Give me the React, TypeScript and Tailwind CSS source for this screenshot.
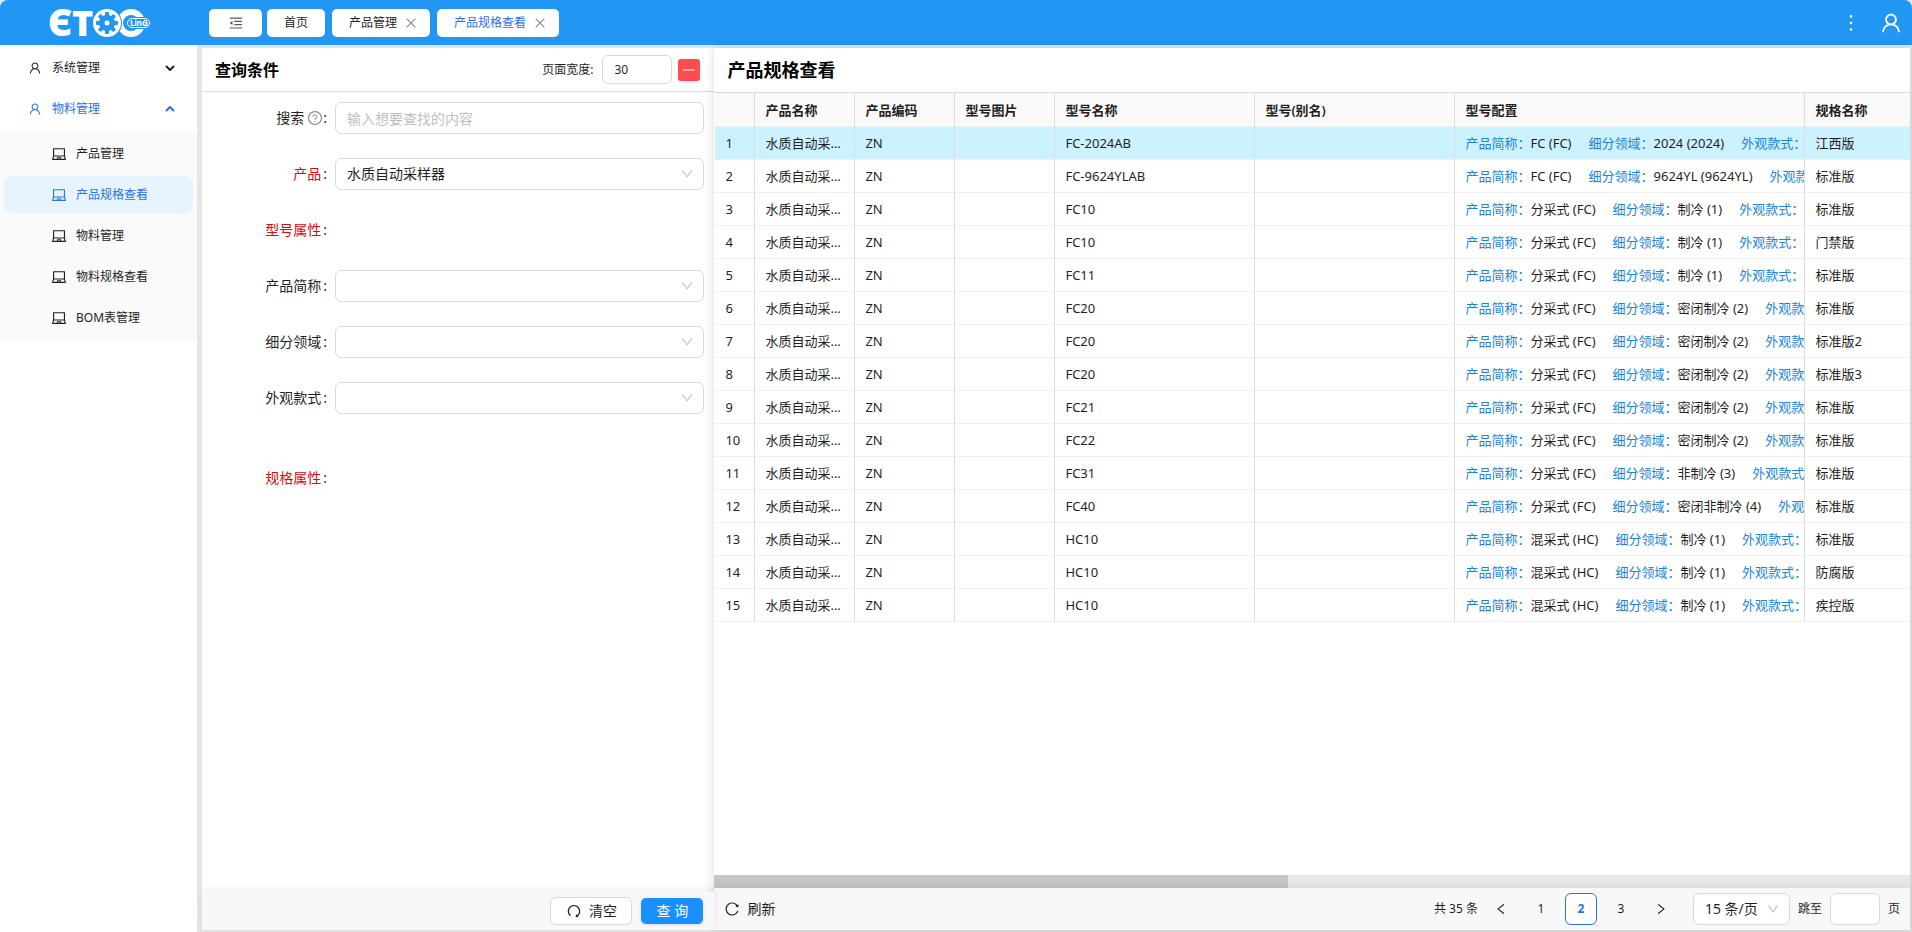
import { useState } from 'react'
import type { ReactNode } from 'react'
import {
      AiOutlineClose,
      AiOutlineDown,
      AiOutlineLaptop,
      AiOutlineLeft,
      AiOutlineMenuFold,
      AiOutlineMinus,
      AiOutlineMore,
      AiOutlineQuestionCircle,
      AiOutlineRedo,
      AiOutlineReload,
      AiOutlineRight,
      AiOutlineUser
} from 'react-icons/ai'

interface SpecRow {
      model: string
      short: string
      field: string
      spec: string
}

const rows: SpecRow[] = [
      { model: 'FC-2024AB', short: 'FC (FC)', field: '2024 (2024)', spec: '江西版' },
      { model: 'FC-9624YLAB', short: 'FC (FC)', field: '9624YL (9624YL)', spec: '标准版' },
      { model: 'FC10', short: '分采式 (FC)', field: '制冷 (1)', spec: '标准版' },
      { model: 'FC10', short: '分采式 (FC)', field: '制冷 (1)', spec: '门禁版' },
      { model: 'FC11', short: '分采式 (FC)', field: '制冷 (1)', spec: '标准版' },
      { model: 'FC20', short: '分采式 (FC)', field: '密闭制冷 (2)', spec: '标准版' },
      { model: 'FC20', short: '分采式 (FC)', field: '密闭制冷 (2)', spec: '标准版2' },
      { model: 'FC20', short: '分采式 (FC)', field: '密闭制冷 (2)', spec: '标准版3' },
      { model: 'FC21', short: '分采式 (FC)', field: '密闭制冷 (2)', spec: '标准版' },
      { model: 'FC22', short: '分采式 (FC)', field: '密闭制冷 (2)', spec: '标准版' },
      { model: 'FC31', short: '分采式 (FC)', field: '非制冷 (3)', spec: '标准版' },
      { model: 'FC40', short: '分采式 (FC)', field: '密闭非制冷 (4)', spec: '标准版' },
      { model: 'HC10', short: '混采式 (HC)', field: '制冷 (1)', spec: '标准版' },
      { model: 'HC10', short: '混采式 (HC)', field: '制冷 (1)', spec: '防腐版' },
      { model: 'HC10', short: '混采式 (HC)', field: '制冷 (1)', spec: '疾控版' }
]

const columns = [
      { title: '', width: 'w-[40px]' },
      { title: '产品名称', width: 'w-[100px]' },
      { title: '产品编码', width: 'w-[100px]' },
      { title: '型号图片', width: 'w-[100px]' },
      { title: '型号名称', width: 'w-[200px]' },
      { title: '型号(别名)', width: 'w-[200px]' },
      { title: '型号配置', width: 'w-[350px]' },
      { title: '规格名称', width: '' }
]

const subMenu = ['产品管理', '产品规格查看', '物料管理', '物料规格查看', 'BOM表管理']

function Logo() {
      const teeth = [0, 45, 90, 135, 180, 225, 270, 315]
      return (
            <svg
                  width="104"
                  height="30"
                  viewBox="0 0 104 30"
                  role="img"
                  aria-label="ETOC LinG"
                  fill="#fff"
                  className="overflow-visible"
            >
                  <text x="-1" y="28" fontSize="37" fontWeight="900" fontFamily="Noto Sans">Є</text>
                  <text x="23" y="28" fontSize="36" fontWeight="900" fontFamily="Noto Sans">T</text>
                  <circle cx="82" cy="15" r="11" fill="none" stroke="#fff" strokeWidth="6" />
                  <circle cx="58" cy="15" r="15" fill="#2196f3" />
                  <circle cx="58" cy="15" r="14" />
                  <circle cx="58" cy="15" r="8" fill="#2196f3" />
                  {teeth.map((a) => (
                        <rect
                              key={a}
                              x="56"
                              y="4"
                              width="4"
                              height="5"
                              rx="1"
                              fill="#2196f3"
                              transform={`rotate(${a} 58 15)`}
                        />
                  ))}
                  <circle cx="58" cy="15" r="2.5" />
                  <rect x="76" y="9" width="26" height="12" rx="6" fill="#2196f3" />
                  <rect x="78.5" y="10.5" width="22" height="9" rx="4.5" fill="#2196f3" stroke="#fff" />
                  <text x="81" y="18" fontSize="8" fontWeight="700" fontFamily="Noto Sans">LinG</text>
            </svg>
      )
}

function Chevron({ up }: { up?: boolean }) {
      return (
            <svg width="10" height="6" viewBox="0 0 10 6" fill="none" stroke="currentColor" strokeWidth="2">
                  <path d={up ? 'M1 5l4-4 4 4' : 'M1 1l4 4 4-4'} />
            </svg>
      )
}

interface FieldProps {
      id?: string
      label: string
      red?: boolean
      help?: boolean
      children?: ReactNode
}

function Field({ id, label, red, help, children }: FieldProps) {
      return (
            <div className="flex h-8 items-center text-sm">
                  <label htmlFor={id} className="flex w-[133px] shrink-0 items-center justify-end pr-2">
                        <span className={red ? 'text-[#d9090f]' : ''}>{label}</span>
                        {help && <AiOutlineQuestionCircle className="ml-[3px] size-4 text-[#8c8c8c]" />}
                        <span className={help ? '' : 'ml-0.5'}>:</span>
                  </label>
                  {children}
            </div>
      )
}

function FieldSelect({ id, value }: { id: string; value?: string }) {
      return (
            <div className="relative min-w-0 flex-1">
                  <select
                        id={id}
                        defaultValue={value ?? ''}
                        className="h-8 w-full appearance-none rounded-md border border-[#d9d9d9] bg-white px-[11px] text-sm"
                  >
                        <option value={value ?? ''}>{value ?? ''}</option>
                  </select>
                  <AiOutlineDown className="pointer-events-none absolute top-[9px] right-[10px] size-[14px] text-[#bfbfbf]" />
            </div>
      )
}

export default function App() {
      const [page, setPage] = useState(2)
      const [selected, setSelected] = useState(0)

      return (
            <div className="flex h-screen flex-col overflow-hidden bg-[#e6e6e6] font-['Noto_Sans','Noto_Sans_CJK_SC',sans-serif] text-[#1f1f1f]">
                  <header className="flex h-[45px] shrink-0 items-center rounded-t-lg bg-[#2196f3]">
                        <div className="w-[209px] shrink-0 pl-[49px]">
                              <Logo />
                        </div>
                        <nav className="flex gap-[7px] text-xs">
                              <button aria-label="收起菜单" className="-mr-[2px] flex h-7 w-[53px] items-center justify-center rounded-[5px] bg-white text-[#595959]">
                                    <AiOutlineMenuFold className="size-4" />
                              </button>
                              <button className="h-7 w-[58px] rounded-[5px] bg-white">首页</button>
                              <button className="flex h-7 items-center gap-[7px] rounded-[5px] bg-white pr-3 pl-[17px]">
                                    产品管理
                                    <AiOutlineClose className="size-[14px] text-[#8c8c8c]" />
                              </button>
                              <button className="flex h-7 items-center gap-[7px] rounded-[5px] bg-white pr-3 pl-[17px] text-[#2a70e8]">
                                    产品规格查看
                                    <AiOutlineClose className="size-[14px] text-[#8c8c8c]" />
                              </button>
                        </nav>
                        <div className="ml-auto flex items-center gap-4 pr-[9px] text-white">
                              <button aria-label="更多">
                                    <AiOutlineMore className="size-6" />
                              </button>
                              <button aria-label="用户">
                                    <AiOutlineUser className="size-6" />
                              </button>
                        </div>
                  </header>

                  <div className="flex min-h-0 flex-1">
                        <aside className="w-[197px] shrink-0 bg-white pt-1 text-xs">
                              <button className="flex h-[37px] w-full items-center gap-[10px] pr-[22px] pl-7">
                                    <AiOutlineUser className="size-[14px]" />
                                    <span>系统管理</span>
                                    <span className="ml-auto">
                                          <Chevron />
                                    </span>
                              </button>
                              <button className="mt-1 flex h-[37px] w-full items-center gap-[10px] pr-[22px] pl-7 text-[#2a70e8]">
                                    <AiOutlineUser className="size-[14px]" />
                                    <span>物料管理</span>
                                    <span className="ml-auto">
                                          <Chevron up />
                                    </span>
                              </button>
                              <ul className="mt-1 flex flex-col gap-1 bg-[#fafafa] p-1">
                                    {subMenu.map((item, i) => (
                                          <li key={item}>
                                                <a
                                                      href="#"
                                                      className={
                                                            i === 1
                                                                  ? 'flex h-[37px] items-center gap-[9px] rounded-lg bg-[#e6f4ff] pl-[47px] text-[#2a70e8]'
                                                                  : 'flex h-[37px] items-center gap-[9px] rounded-lg pl-[47px]'
                                                      }
                                                >
                                                      <AiOutlineLaptop className="size-4" />
                                                      {item}
                                                </a>
                                          </li>
                                    ))}
                              </ul>
                        </aside>

                        <main className="mt-[3px] mr-[2px] mb-[2px] ml-[5px] flex min-w-0 flex-1 bg-white">
                              {/* query conditions */}
                              <section className="flex w-[30%] shrink-0 flex-col">
                                    <div className="flex h-11 shrink-0 items-center border-b border-[#d9d9d9] pr-[14px] pl-[13px]">
                                          <h2 className="text-base font-bold text-black">查询条件</h2>
                                          <label htmlFor="page-width" className="mr-[9px] ml-auto text-xs">
                                                页面宽度:
                                          </label>
                                          <input
                                                id="page-width"
                                                defaultValue="30"
                                                className="h-[29px] w-[70px] rounded-md border border-[#d9d9d9] px-[11px] text-xs"
                                          />
                                          <button
                                                aria-label="收起"
                                                className="ml-[6px] flex h-[22px] w-[22px] items-center justify-center rounded-[3px] bg-[#ff4d4f] text-white shadow-sm"
                                          >
                                                <AiOutlineMinus className="size-4" />
                                          </button>
                                    </div>
                                    <form className="flex min-h-0 flex-1 flex-col gap-6 overflow-hidden pt-[10px] pr-[10px]">
                                          <Field id="keyword" label="搜索" help>
                                                <input
                                                      id="keyword"
                                                      placeholder="输入想要查找的内容"
                                                      className="h-8 min-w-0 flex-1 rounded-md border border-[#d9d9d9] px-[11px] text-sm placeholder:text-[#bfbfbf]"
                                                />
                                          </Field>
                                          <Field id="product" label="产品" red>
                                                <FieldSelect id="product" value="水质自动采样器" />
                                          </Field>
                                          <Field label="型号属性" red />
                                          <Field id="short" label="产品简称">
                                                <FieldSelect id="short" />
                                          </Field>
                                          <Field id="field" label="细分领域">
                                                <FieldSelect id="field" />
                                          </Field>
                                          <Field id="style" label="外观款式">
                                                <FieldSelect id="style" />
                                          </Field>
                                          <div className="pt-6">
                                                <Field label="规格属性" red />
                                          </div>
                                    </form>
                                    <div className="relative z-20 flex h-[38px] shrink-0 items-center justify-end gap-[9px] bg-[#f8f8f8] pr-[11px] text-sm shadow-[0_-2px_8px_rgba(0,0,0,0.08)]">
                                          <button className="flex h-7 w-[82px] items-center justify-center gap-[7px] rounded-md border border-[#d9d9d9] bg-white">
                                                <AiOutlineRedo className="size-4" />
                                                清空
                                          </button>
                                          <button className="h-[26px] w-[62px] rounded-[5px] bg-[#1890ff] text-white shadow-sm">查 询</button>
                                    </div>
                              </section>

                              {/* result table */}
                              <section className="relative z-10 flex min-w-0 flex-1 flex-col bg-white shadow-[0_0_10px_rgba(0,0,0,0.15)]">
                                    <h2 className="flex h-[45px] shrink-0 items-center border-b border-[#d9d9d9] pl-[13px] text-lg font-bold text-black">
                                          产品规格查看
                                    </h2>
                                    <div className="min-h-0 flex-1 overflow-hidden pl-px">
                                          <table className="w-full table-fixed border-separate border-spacing-0 text-[13px] leading-5">
                                                <thead>
                                                      <tr>
                                                            {columns.map((col, i) => (
                                                                  <th
                                                                        key={i}
                                                                        className={`${col.width} h-[34px] border-r border-b border-r-[#dcdcdc] border-b-[#f0f0f0] bg-[#fafafa] px-[10px] text-left font-semibold first:rounded-tl-lg last:border-r-0`}
                                                                  >
                                                                        {col.title}
                                                                  </th>
                                                            ))}
                                                      </tr>
                                                </thead>
                                                <tbody>
                                                      {rows.map((row, i) => (
                                                            <tr
                                                                  key={i}
                                                                  onClick={() => setSelected(i)}
                                                                  className={`${selected === i ? 'bg-[#ccf1ff]' : 'bg-white'} *:h-[33px] *:border-r *:border-b *:border-r-[#dcdcdc] *:border-b-[#f0f0f0] *:pl-[10px] *:last:border-r-0`}
                                                            >
                                                                  <td>{i + 1}</td>
                                                                  <td className="truncate pr-2">水质自动采样器</td>
                                                                  <td>ZN</td>
                                                                  <td></td>
                                                                  <td>{row.model}</td>
                                                                  <td></td>
                                                                  <td className="overflow-hidden whitespace-nowrap">
                                                                        <span className="text-[#1c84d6]">产品简称：</span>
                                                                        <span className="mr-[17px]">{row.short}</span>
                                                                        <span className="text-[#1c84d6]">细分领域：</span>
                                                                        <span className="mr-[17px]">{row.field}</span>
                                                                        <span className="text-[#1c84d6]">外观款式：</span>
                                                                  </td>
                                                                  <td>{row.spec}</td>
                                                            </tr>
                                                      ))}
                                                </tbody>
                                          </table>
                                    </div>
                                    <div className="h-[13px] shrink-0 bg-[#e9e9e9]">
                                          <div className="h-full w-[48%] bg-[#c6c6c6]" />
                                    </div>
                                    <footer className="flex h-[42px] shrink-0 items-center bg-[#f8f8f8] pr-[10px] pl-[10px] text-xs shadow-[0_-2px_8px_rgba(0,0,0,0.08)]">
                                          <button className="flex items-center gap-[7px] text-sm">
                                                <AiOutlineReload className="size-4" />
                                                刷新
                                          </button>
                                          <span className="mr-[7px] ml-auto">共 35 条</span>
                                          <div className="flex gap-2">
                                                <button aria-label="上一页" className="flex size-8 items-center justify-center">
                                                      <AiOutlineLeft className="size-[14px]" />
                                                </button>
                                                {[1, 2, 3].map((n) => (
                                                      <button
                                                            key={n}
                                                            onClick={() => setPage(n)}
                                                            className={
                                                                  page === n
                                                                        ? 'size-8 rounded-md border border-[#2a70e8] bg-white font-bold text-[#2a70e8]'
                                                                        : 'size-8 rounded-md'
                                                            }
                                                      >
                                                            {n}
                                                      </button>
                                                ))}
                                                <button aria-label="下一页" className="flex size-8 items-center justify-center">
                                                      <AiOutlineRight className="size-[14px]" />
                                                </button>
                                          </div>
                                          <div className="relative ml-4 w-[97px]">
                                                <select
                                                      aria-label="每页条数"
                                                      className="h-8 w-full appearance-none rounded-md border border-[#d9d9d9] bg-white pl-[11px] text-sm"
                                                >
                                                      <option>15 条/页</option>
                                                </select>
                                                <AiOutlineDown className="pointer-events-none absolute top-[9px] right-[10px] size-[14px] text-[#bfbfbf]" />
                                          </div>
                                          <label htmlFor="jump" className="mx-2">
                                                跳至
                                          </label>
                                          <input id="jump" className="h-8 w-[50px] rounded-md border border-[#d9d9d9] bg-white px-2" />
                                          <span className="ml-2">页</span>
                                    </footer>
                              </section>
                        </main>
                  </div>
            </div>
      )
}
